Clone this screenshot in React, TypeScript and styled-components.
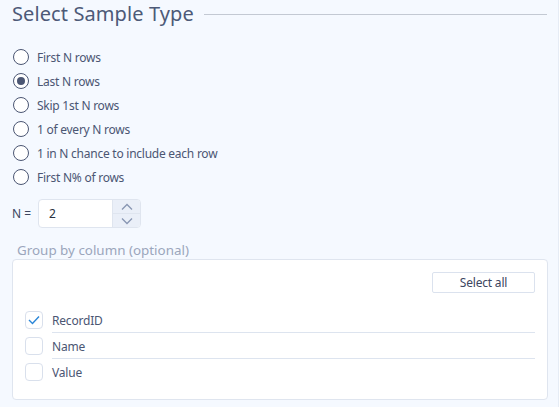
import React, { useState } from "react";
import styled, { createGlobalStyle } from "styled-components";

const Global = createGlobalStyle`
  html, body { margin: 0; padding: 0; }
  body {
    background: #f5f9ff;
    font-family: "Noto Sans", "Open Sans", sans-serif;
    color: #4b5673;
  }
  * { box-sizing: border-box; }
`;

const Page = styled.div`
  width: 559px;
  height: 407px;
  padding: 0 11px 0 12px;
  border-right: 1px solid #e6ecf5;
  display: flex;
  flex-direction: column;
`;

const Header = styled.div`
  display: flex;
  align-items: center;
  gap: 10px;
  height: 28px;
`;

const Title = styled.h1`
  margin: 0;
  font-size: 20px;
  font-weight: 400;
  letter-spacing: 0.1px;
  color: #4d5a78;
  white-space: nowrap;
  line-height: 28px;
`;

const Rule = styled.div`
  flex: 1;
  height: 1px;
  background: #c3c9d3;
  margin-top: 1px;
`;

const RadioList = styled.div`
  display: flex;
  flex-direction: column;
  margin-top: 17px;
`;

const RadioRow = styled.label`
  display: flex;
  align-items: center;
  height: 24px;
  gap: 8px;
  cursor: pointer;
  font-size: 12px;
  letter-spacing: -0.25px;
  color: #4b5673;
`;

const RadioCircle = styled.span<{ $checked: boolean }>`
  width: 16px;
  height: 16px;
  border-radius: 50%;
  border: 1px solid #4b5673;
  background: #fff;
  margin-left: 1px;
  display: flex;
  align-items: center;
  justify-content: center;
  &::after {
    content: "";
    width: 8px;
    height: 8px;
    border-radius: 50%;
    background: #4b5673;
    display: ${(p) => (p.$checked ? "block" : "none")};
  }
`;

const NRow = styled.div`
  display: flex;
  align-items: center;
  gap: 7px;
  margin-top: 10px;
  font-size: 12px;
  color: #3c4660;
`;

const Spin = styled.div`
  display: flex;
  width: 103px;
  height: 29px;
  border: 1px solid #dfe5ef;
  border-radius: 4px;
  background: #fff;
  overflow: hidden;
`;

const NumInput = styled.input`
  flex: 1;
  width: 0;
  border: none;
  outline: none;
  padding: 0 0 0 10px;
  font-family: inherit;
  font-size: 12px;
  color: #2b3140;
  background: transparent;
`;

const Arrows = styled.div`
  width: 28px;
  display: flex;
  flex-direction: column;
  background: #eaeff8;
  border-left: 1px solid #dfe5ef;
`;

const ArrowBtn = styled.div<{ $top?: boolean }>`
  flex: 1;
  display: flex;
  align-items: center;
  justify-content: center;
  border-bottom: ${(p) => (p.$top ? "1px solid #dfe5ef" : "none")};
`;

const GroupLabel = styled.div`
  margin-top: 13px;
  margin-left: 5px;
  font-size: 13.4px;
  color: #9ba6bc;
  line-height: 18px;
`;

const Panel = styled.div`
  width: 536px;
  height: 141px;
  background: #fff;
  border: 1px solid #dfe5ef;
  border-radius: 4px;
  padding: 12px 12px 0 12px;
  display: flex;
  flex-direction: column;
`;

const Toolbar = styled.div`
  display: flex;
  justify-content: flex-end;
`;

const SelectAll = styled.button`
  width: 103px;
  height: 21px;
  background: #fff;
  border: 1px solid #dbe2ee;
  border-radius: 2px;
  font-family: inherit;
  font-size: 12px;
  letter-spacing: -0.2px;
  color: #3c4660;
  padding: 0;
  cursor: pointer;
`;

const CheckList = styled.div`
  margin-top: 14px;
  display: flex;
  flex-direction: column;
`;

const CheckRow = styled.label`
  display: flex;
  align-items: center;
  height: 26px;
  gap: 9px;
  font-size: 12px;
  letter-spacing: -0.2px;
  color: #4b5673;
  cursor: pointer;
`;

const Box = styled.span`
  width: 18px;
  height: 18px;
  border: 1px solid #d9e0ec;
  border-radius: 4px;
  background: #fff;
  display: flex;
  align-items: center;
  justify-content: center;
  flex: none;
`;

const CheckText = styled.span<{ $line: boolean }>`
  flex: 1;
  align-self: stretch;
  display: flex;
  align-items: center;
  border-bottom: ${(p) => (p.$line ? "1px solid #dde4ef" : "1px solid transparent")};
  padding-top: 1px;
`;

const options = [
  "First N rows",
  "Last N rows",
  "Skip 1st N rows",
  "1 of every N rows",
  "1 in N chance to include each row",
  "First N% of rows",
];

const columns = ["RecordID", "Name", "Value"];

export default function App() {
  const [sel, setSel] = useState(1);
  const [n, setN] = useState("2");
  const [checked, setChecked] = useState<boolean[]>([true, false, false]);

  return (
    <>
      <Global />
      <Page>
        <Header>
          <Title>Select Sample Type</Title>
          <Rule />
        </Header>
        <RadioList>
          {options.map((o, i) => (
            <RadioRow key={o} onClick={() => setSel(i)}>
              <RadioCircle $checked={sel === i} />
              {o}
            </RadioRow>
          ))}
        </RadioList>
        <NRow>
          N =
          <Spin>
            <NumInput value={n} onChange={(e) => setN(e.target.value)} />
            <Arrows>
              <ArrowBtn $top>
                <svg width="12" height="8" viewBox="0 0 12 8">
                  <path d="M1 6.5 L6 1.5 L11 6.5" fill="none" stroke="#8896b3" strokeWidth="1.3" />
                </svg>
              </ArrowBtn>
              <ArrowBtn>
                <svg width="12" height="8" viewBox="0 0 12 8">
                  <path d="M1 1.5 L6 6.5 L11 1.5" fill="none" stroke="#8896b3" strokeWidth="1.3" />
                </svg>
              </ArrowBtn>
            </Arrows>
          </Spin>
        </NRow>
        <GroupLabel>Group by column (optional)</GroupLabel>
        <Panel>
          <Toolbar>
            <SelectAll onClick={() => setChecked([true, true, true])}>Select all</SelectAll>
          </Toolbar>
          <CheckList>
            {columns.map((c, i) => (
              <CheckRow
                key={c}
                onClick={() => setChecked(checked.map((v, j) => (j === i ? !v : v)))}
              >
                <Box>
                  {checked[i] && (
                    <svg width="12" height="10" viewBox="0 0 12 10">
                      <path d="M1 5 L4.5 8.5 L11 1.5" fill="none" stroke="#2a86d8" strokeWidth="1.4" />
                    </svg>
                  )}
                </Box>
                <CheckText $line={i < columns.length - 1}>{c}</CheckText>
              </CheckRow>
            ))}
          </CheckList>
        </Panel>
      </Page>
    </>
  );
}
